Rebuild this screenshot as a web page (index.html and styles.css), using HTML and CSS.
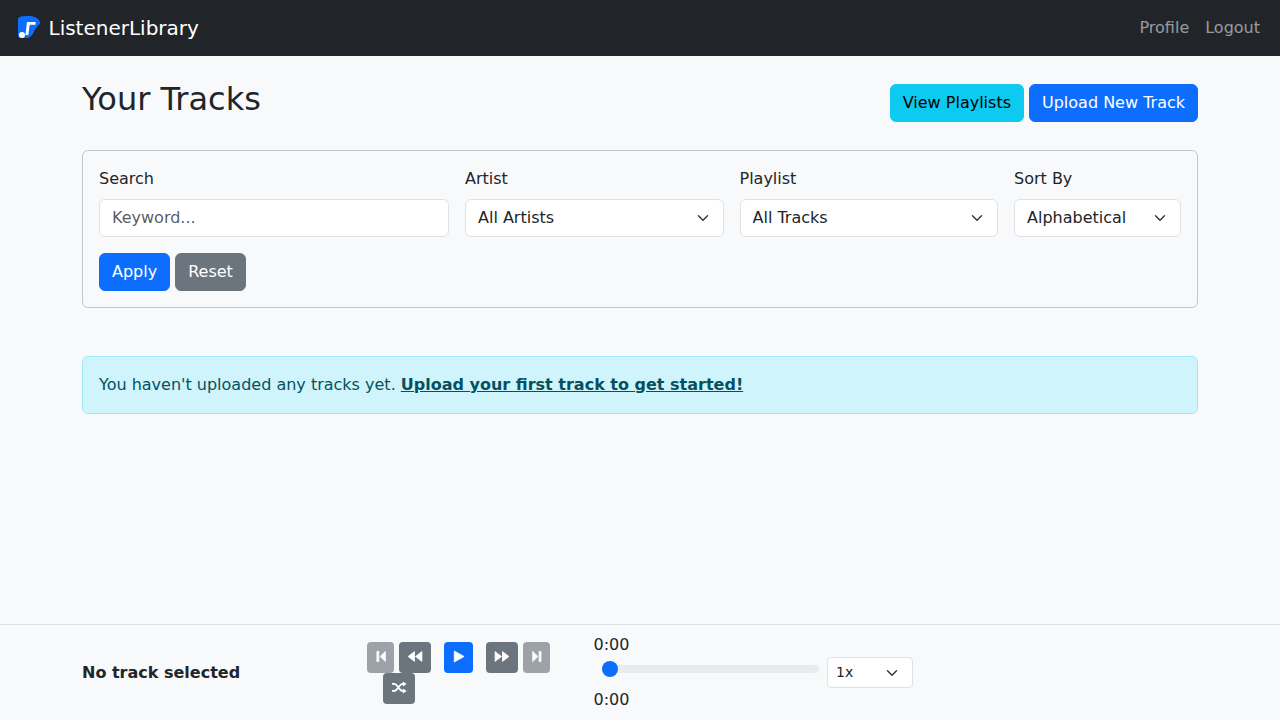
FILE: index.html
```html
<!DOCTYPE html>
<html lang="en">
<head>
<meta charset="utf-8">
<title>ListenerLibrary</title>
<link rel="stylesheet" href="styles.css">
</head>
<body>
<nav class="navbar">
  <a class="brand" href="#">
    <svg class="logo" viewBox="0 0 24 24" width="24" height="24"><path fill="#0d6efd" d="M2 3.500C2 1.800 3.500 1 5 .6 8 0 13 -.2 17 .4c3 .5 6 2.800 7 5.600.4 1.200-.4 2.200-1.300 3-1.700 1.500-3.500 3.600-4.700 6.500-1.100 2.700-2.800 5.500-5.500 6.200-2.700.6-6 .4-8.200.2-1.500-.2-2.300-1-2.300-2.500z"/><path fill="#fff" d="M11 6h8.500v2.800h-5.800l-1.400 10.200h-2.900z"/><circle cx="6" cy="19" r="3" fill="#fff"/></svg>
    <span>ListenerLibrary</span>
  </a>
  <div class="nav-links"><a href="#">Profile</a><a href="#">Logout</a></div>
</nav>
<main class="container">
  <header class="page-head">
    <h1>Your Tracks</h1>
    <div class="head-actions">
      <a class="btn btn-info" href="#">View Playlists</a>
      <a class="btn btn-primary" href="#">Upload New Track</a>
    </div>
  </header>
  <form class="filters">
    <div class="filter-row">
      <div class="field f-search"><label for="q">Search</label><input id="q" class="control input" placeholder="Keyword..."></div>
      <div class="field f-artist"><label for="a">Artist</label><select id="a" class="control select"><option>All Artists</option></select></div>
      <div class="field f-playlist"><label for="p">Playlist</label><select id="p" class="control select"><option>All Tracks</option></select></div>
      <div class="field f-sort"><label for="s">Sort By</label><select id="s" class="control select"><option>Alphabetical</option></select></div>
    </div>
    <div class="filter-actions">
      <button type="button" class="btn btn-primary">Apply</button>
      <button type="button" class="btn btn-secondary">Reset</button>
    </div>
  </form>
  <div class="alert">You haven't uploaded any tracks yet. <a href="#">Upload your first track to get started!</a></div>
</main>
<footer class="player">
  <div class="player-inner">
    <div class="now-playing">No track selected</div>
    <div class="controls">
      <button class="pbtn disabled narrow"><svg viewBox="0 0 16 16"><path d="M3.900 2.400h1.900v10.200H3.900zM12.400 2.400v10.200L7.200 7.500z"/></svg></button>
      <button class="pbtn"><svg viewBox="0 0 16 16"><path d="M1.100 7.500 7.500 2.600v9.800zM8.500 7.500 14.900 2.600v9.800z"/></svg></button>
      <button class="pbtn play"><svg viewBox="0 0 16 16"><path d="M3.300 2v11L13.100 7.500z"/></svg></button>
      <button class="pbtn"><svg viewBox="0 0 16 16"><path d="M14.900 7.500 8.500 2.600v9.800zM7.500 7.500 1.100 2.600v9.800z"/></svg></button>
      <button class="pbtn disabled narrow"><svg viewBox="0 0 16 16"><path d="M3.700 2.400v10.200l5.200-5.100zM10.100 2.400h1.900v10.200h-1.900z"/></svg></button>
      <button class="pbtn shuffle"><svg class="shuffle-icon" viewBox="0 0 16 16"><path class="shuffle-line" d="M1 3.900h2.200c3.400 0 5 7 8.400 7h1M1 10.900h2.200c3.400 0 5-7 8.400-7h1"/><path d="M11.800 1.400l3.900 2.500-3.900 2.500zM11.800 8.400l3.900 2.500-3.900 2.500z"/></svg></button>
    </div>
    <div class="timeline">
      <div class="time">0:00</div>
      <div class="seek-row">
        <div class="seek"><span class="thumb"></span></div>
        <select class="speed select"><option>1x</option></select>
      </div>
      <div class="time">0:00</div>
    </div>
  </div>
</footer>
</body>
</html>
```
FILE: styles.css
```css
* { box-sizing: border-box; }
html, body { margin: 0; height: 100%; }
body {
  width: 1280px;
  height: 720px;
  overflow: hidden;
  display: flex;
  flex-direction: column;
  background: #f8f9fa;
  color: #212529;
  font-family: "DejaVu Sans", sans-serif;
  font-size: 16px;
  line-height: 24px;
}
.navbar {
  height: 56px;
  flex: none;
  background: #212529;
  display: flex;
  align-items: center;
  justify-content: space-between;
  padding: 0 20px 0 16px;
}
.brand {
  display: flex;
  align-items: center;
  gap: 8.5px;
  color: #fff;
  font-size: 20px;
  text-decoration: none;
}
.logo { display: block; }
.nav-links { display: flex; gap: 16px; }
.nav-links a { color: rgba(255,255,255,.55); text-decoration: none; }
.container { width: 1116px; margin: 0 auto; flex: 1; }
.page-head {
  display: flex;
  justify-content: space-between;
  align-items: flex-start;
  padding-top: 24px;
  height: 94px;
}
h1 { margin: 0; font-size: 32px; line-height: 38px; font-weight: 400; }
.head-actions { display: flex; gap: 5px; padding-top: 4px; }
.btn {
  display: inline-block;
  border: 1px solid transparent;
  border-radius: 6px;
  padding: 6px 12px;
  font: inherit;
  line-height: 24px;
  text-decoration: none;
  color: #fff;
}
.btn-primary { background: #0d6efd; border-color: #0d6efd; }
.btn-info { background: #0dcaf0; border-color: #0dcaf0; color: #000; }
.btn-secondary { background: #6c757d; border-color: #6c757d; }
.filters {
  border: 1px solid rgba(0,0,0,.2);
  border-radius: 6px;
  padding: 16px;
  height: 158px;
}
.filter-row { display: flex; gap: 16px; }
.field { min-width: 0; flex: none; }
.f-search { width: 350px; }
.f-artist { width: 258.5px; }
.f-playlist { width: 258.5px; }
.f-sort { width: 167px; }
label { display: block; margin-bottom: 8px; }
.control {
  display: block;
  width: 100%;
  height: 38px;
  padding: 6px 12px;
  border: 1px solid #dee2e6;
  border-radius: 6px;
  background: #fff;
  color: #212529;
  font: inherit;
}
.input { padding: 5px 12px 7px; }
.control::placeholder { color: rgba(33,37,41,.75); opacity: 1; }
.select {
  appearance: none;
  background-image: url("data:image/svg+xml,%3csvg xmlns='http://www.w3.org/2000/svg' viewBox='0 0 16 16'%3e%3cpath fill='none' stroke='%23343a40' stroke-linecap='round' stroke-linejoin='round' stroke-width='2' d='m2 5 6 6 6-6'/%3e%3c/svg%3e");
  background-repeat: no-repeat;
  background-position: right 12px center;
  background-size: 16px 12px;
  background-color: #fff;
}
.filter-actions { display: flex; gap: 5px; margin-top: 16px; }
.alert {
  margin-top: 48px;
  height: 58px;
  padding: 16px;
  border: 1px solid #9eeaf9;
  border-radius: 6px;
  background: #cff4fc;
  color: #055160;
}
.alert a { color: #055160; font-weight: 700; }
.player {
  height: 96px;
  flex: none;
  border-top: 1px solid #dee2e6;
  background: #f8f9fa;
}
.player-inner {
  width: 1116px;
  margin: 0 auto;
  height: 100%;
  display: flex;
  align-items: center;
}
.now-playing { width: 278px; font-weight: 700; }
.controls {
  width: 197px;
  display: flex;
  flex-wrap: wrap;
  justify-content: center;
  align-items: center;
  column-gap: 5px;
}
.pbtn {
  width: 32px;
  height: 31px;
  padding: 0;
  border: 0;
  border-radius: 4px;
  background: #6c757d;
  display: flex;
  align-items: center;
  justify-content: center;
  color: #fff;
}
.pbtn svg {
  width: 16px;
  height: 16px;
  display: block;
  fill: currentColor;
  stroke: currentColor;
  stroke-width: .8;
  stroke-linejoin: round;
}
.pbtn .shuffle-icon { stroke-width: 0; }
.pbtn .shuffle-line { fill: none; stroke-width: 1.8; }
.pbtn.narrow { width: 27px; }
.pbtn.disabled { opacity: .65; }
.pbtn.play { width: 29px; background: #0d6efd; margin: 0 8px; }
.pbtn.shuffle { margin-right: 119px; }
.timeline { margin-left: 36.5px; width: 320px; }
.time { height: 24px; }
.seek-row { display: flex; align-items: flex-start; gap: 8px; height: 31px; }
.seek {
  position: relative;
  width: 217px;
  height: 8px;
  margin: 8px 0 0 8.5px;
  border-radius: 16px;
  background: #e9ecef;
}
.thumb {
  position: absolute;
  left: 0;
  top: -4px;
  width: 16px;
  height: 16px;
  border-radius: 50%;
  background: #0d6efd;
}
.speed {
  width: 86px;
  height: 31px;
  padding: 4px 8px;
  border: 1px solid #dee2e6;
  border-radius: 4px;
  color: #212529;
  font: 14px/21px "DejaVu Sans", sans-serif;
}
```
